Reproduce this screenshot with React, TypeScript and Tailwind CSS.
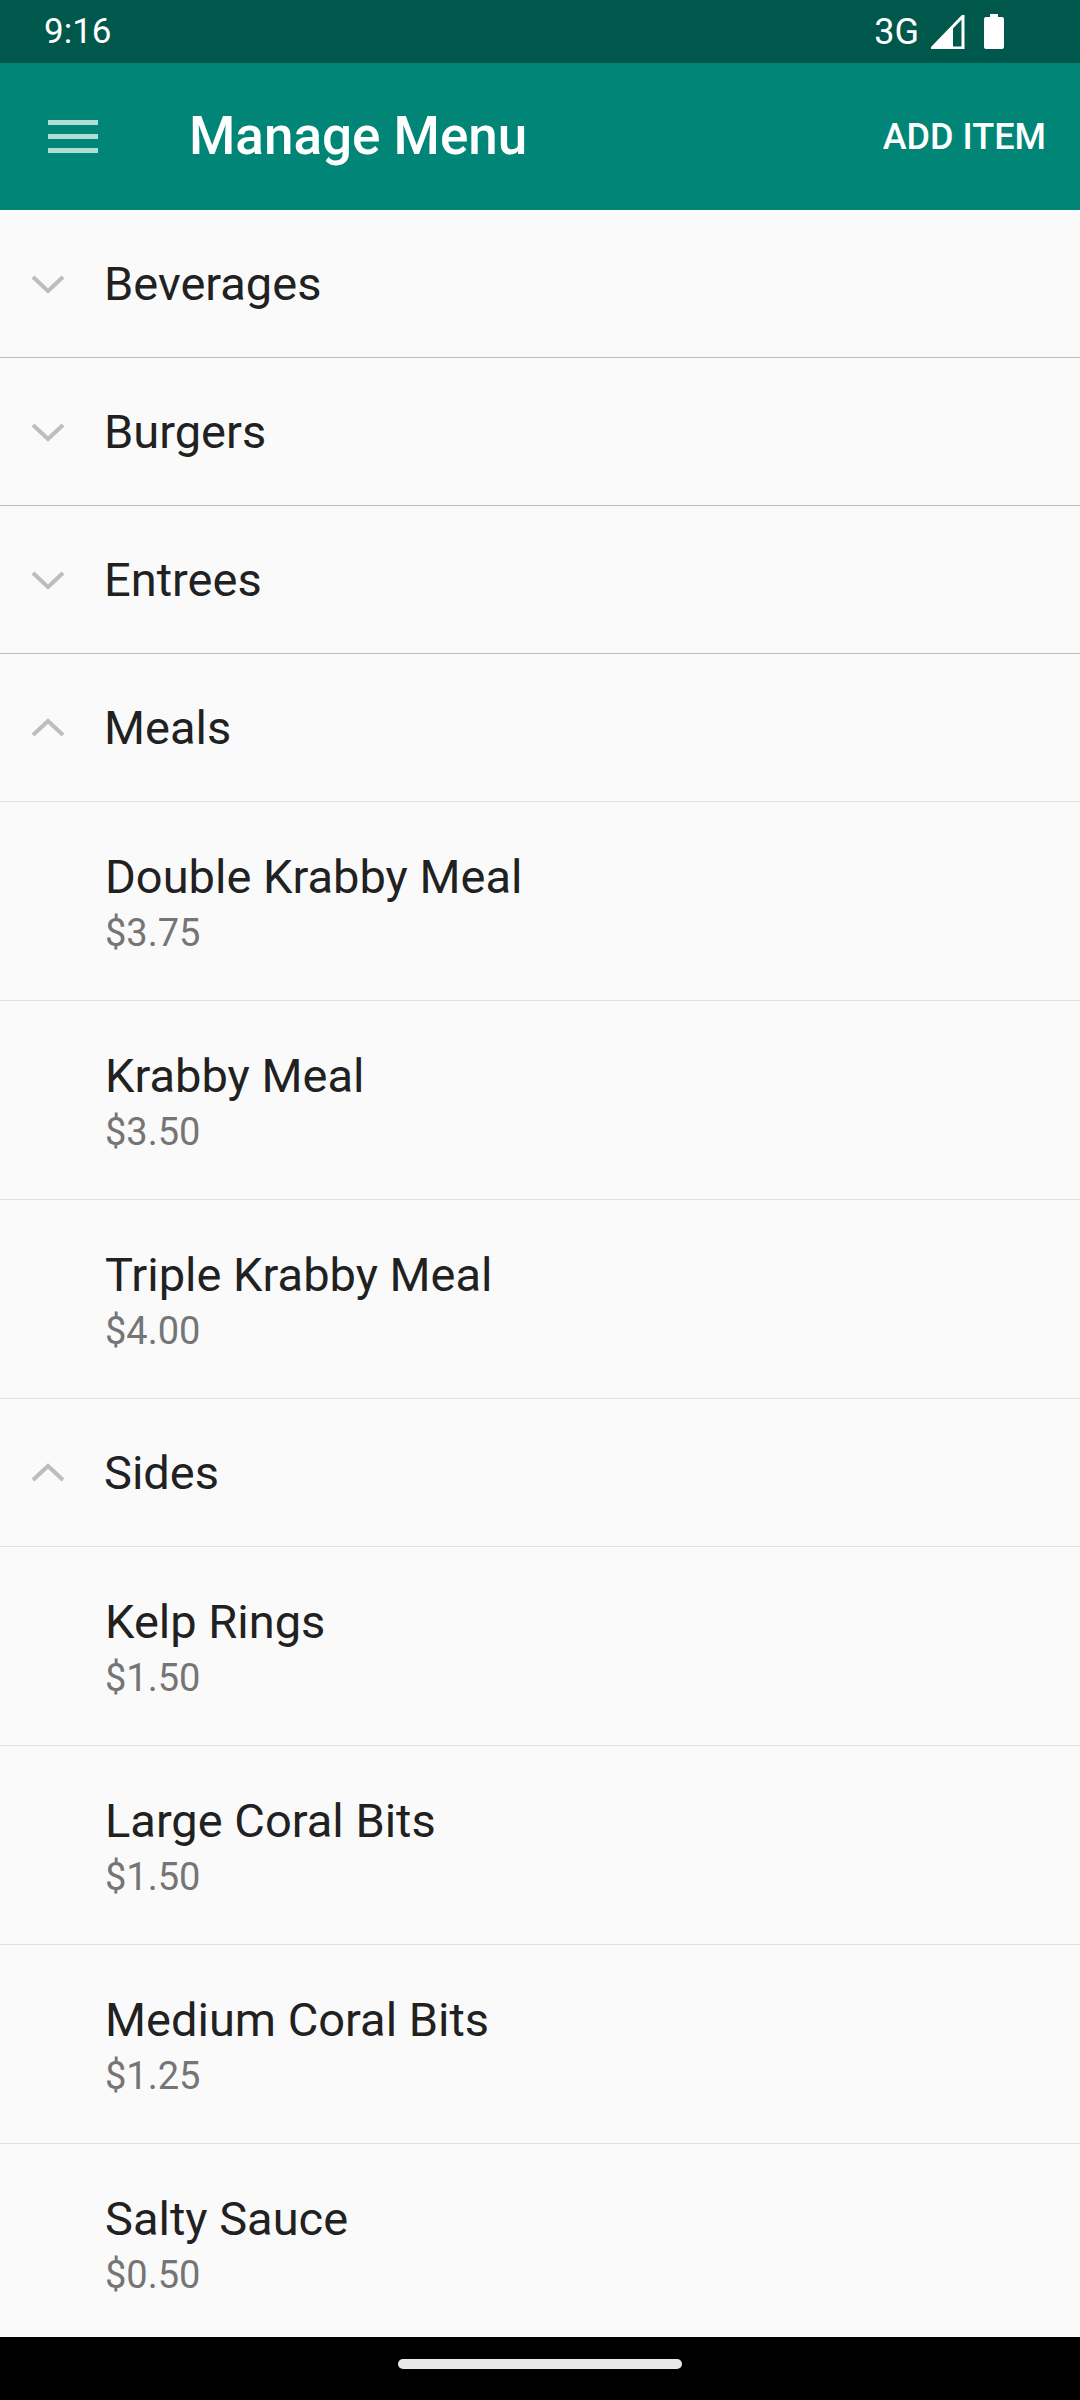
import React from 'react'

type Item = { name: string; price: string }
type Category = { name: string; open: boolean; items: Item[] }

const menu: Category[] = [
  { name: 'Beverages', open: false, items: [] },
  { name: 'Burgers', open: false, items: [] },
  { name: 'Entrees', open: false, items: [] },
  {
    name: 'Meals',
    open: true,
    items: [
      { name: 'Double Krabby Meal', price: '$3.75' },
      { name: 'Krabby Meal', price: '$3.50' },
      { name: 'Triple Krabby Meal', price: '$4.00' },
    ],
  },
  {
    name: 'Sides',
    open: true,
    items: [
      { name: 'Kelp Rings', price: '$1.50' },
      { name: 'Large Coral Bits', price: '$1.50' },
      { name: 'Medium Coral Bits', price: '$1.25' },
      { name: 'Salty Sauce', price: '$0.50' },
    ],
  },
]

function Chevron({ up }: { up: boolean }) {
  return (
    <svg width="34" height="20" viewBox="0 0 34 20" className="shrink-0">
      <path
        d={up ? 'M2 17 L17 3 L32 17' : 'M2 3 L17 17 L32 3'}
        fill="none"
        stroke="#bdbdbd"
        strokeWidth="4"
      />
    </svg>
  )
}

function StatusBar() {
  return (
    <div className="h-[63px] bg-[#00574b] flex items-center justify-between pl-[44px] pr-[75px] text-white">
      <span className="text-[35px] leading-none">9:16</span>
      <div className="flex items-center gap-[12px]">
        <span className="text-[36px] leading-none">3G</span>
        <svg width="34" height="34" viewBox="0 0 34 34">
          <path d="M32 1 L32 33 L1 33 Z" fill="none" stroke="#fff" strokeWidth="3" strokeLinejoin="miter" />
          <path d="M1 33 L22 12 L22 33 Z" fill="#fff" />
        </svg>
        <svg width="22" height="36" viewBox="0 0 22 36" className="ml-[6px]">
          <rect x="7" y="0" width="8" height="4" fill="#fff" />
          <rect x="1" y="3" width="20" height="32" rx="2" fill="#fff" />
        </svg>
      </div>
    </div>
  )
}

function AppBar() {
  return (
    <div className="h-[147px] bg-[#008577] flex items-center text-white">
      <div className="w-[189px] flex items-center pl-[48px]">
        <svg width="50" height="34" viewBox="0 0 50 34">
          <rect x="0" y="0" width="50" height="5" fill="#b2ddd7" />
          <rect x="0" y="14" width="50" height="5" fill="#b2ddd7" />
          <rect x="0" y="28" width="50" height="5" fill="#b2ddd7" />
        </svg>
      </div>
      <h1 className="flex-1 text-[53px] font-medium leading-none">Manage Menu</h1>
      <button className="pr-[34px] text-[36px] font-medium leading-none">ADD ITEM</button>
    </div>
  )
}

export default function App() {
  return (
    <div className="w-[1080px] h-[2400px] flex flex-col bg-[#fafafa]" style={{ fontFamily: 'Roboto, "Noto Sans", sans-serif' }}>
      <StatusBar />
      <AppBar />
      <div className="flex-1 overflow-hidden">
        {menu.map((cat) => (
          <div key={cat.name}>
            <div
              className={`h-[148px] flex items-center border-b ${cat.open ? 'border-[#e0e0e0]' : 'border-[#bdbdbd]'}`}
            >
              <div className="w-[104px] flex pl-[31px]">
                <Chevron up={cat.open} />
              </div>
              <span className="text-[47px] text-[#212121] leading-none">{cat.name}</span>
            </div>
            {cat.items.map((item) => (
              <div key={item.name} className="h-[199px] border-b border-[#e0e0e0] pl-[105px] pt-[47px]">
                <div className="text-[47px] leading-[56px] text-[#212121]">{item.name}</div>
                <div className="mt-[6px] text-[38px] leading-[44px] text-[#757575]">{item.price}</div>
              </div>
            ))}
          </div>
        ))}
      </div>
      <div className="h-[63px] bg-black flex items-center justify-center shrink-0">
        <div className="w-[284px] h-[10px] rounded-full bg-[#e8e8e8] mb-[10px]" />
      </div>
    </div>
  )
}
